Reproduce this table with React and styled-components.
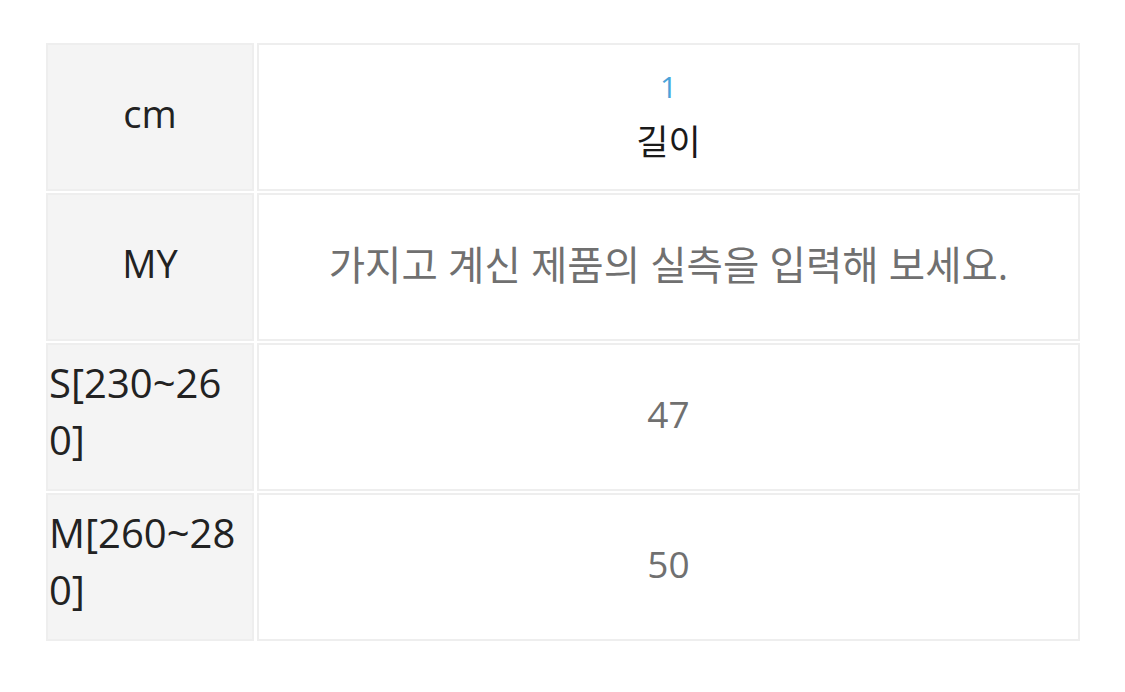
import React from "react";
import styled, { createGlobalStyle } from "styled-components";

const Global = createGlobalStyle`
  html, body { margin: 0; padding: 0; background: #ffffff; }
  body { font-family: "Open Sans", "Noto Sans CJK KR", sans-serif; }
`;

const Page = styled.div`
  padding: 43px 45px 0 46px;
`;

const Table = styled.div`
  display: grid;
  grid-template-columns: 208px 1fr;
  grid-auto-rows: 148px;
  gap: 2px 3px;
  width: 1034px;
`;

const HeadCell = styled.div`
  background: #f4f4f4;
  border: 2px solid #eeeeee;
  box-sizing: border-box;
  display: flex;
  align-items: center;
  justify-content: ${(p) => (p.$left ? "flex-start" : "center")};
  padding: ${(p) => (p.$left ? "0 15px 12px 1px" : "0 0 8px 0")};
  font-size: ${(p) => (p.$left ? "40px" : "38px")};
  line-height: 57px;
  color: #222222;
  text-align: ${(p) => (p.$left ? "left" : "center")};
  word-break: break-all;
`;

const BodyCell = styled.div`
  background: #ffffff;
  border: 2px solid #eeeeee;
  box-sizing: border-box;
  display: flex;
  flex-direction: column;
  align-items: center;
  justify-content: center;
  padding-bottom: ${(p) => p.$pb || "8px"};
  font-size: ${(p) => p.$size || "37px"};
  color: #707070;
  text-align: center;
`;

const Index = styled.div`
  font-size: 30px;
  line-height: 50px;
  color: #4aa3d9;
`;

const Label = styled.div`
  font-size: 35px;
  line-height: 60px;
  color: #1a1a1a;
`;

const rows = [
  { head: "S[230~260]", value: "47" },
  { head: "M[260~280]", value: "50" },
];

export default function App() {
  return (
    <Page>
      <Global />
      <Table>
        <HeadCell>cm</HeadCell>
        <BodyCell $pb="0px">
          <Index>1</Index>
          <Label>길이</Label>
        </BodyCell>
        <HeadCell>MY</HeadCell>
        <BodyCell $size="39.5px">가지고 계신 제품의 실측을 입력해 보세요.</BodyCell>
        {rows.map((r) => (
          <React.Fragment key={r.head}>
            <HeadCell $left>{r.head}</HeadCell>
            <BodyCell>{r.value}</BodyCell>
          </React.Fragment>
        ))}
      </Table>
    </Page>
  );
}
